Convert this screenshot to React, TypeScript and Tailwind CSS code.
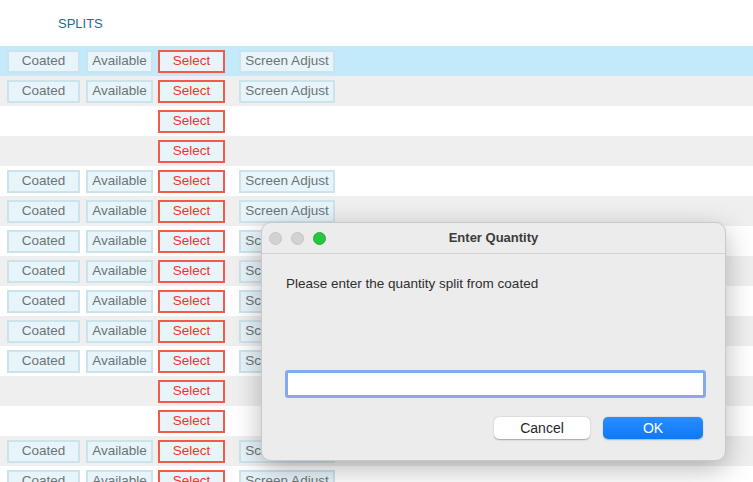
import React from "react";

type Row = { full: boolean };

// true = Coated / Available / Select / Screen Adjust, false = Select only
const rows: Row[] = [
  true, true, false, false, true, true, true, true, true, true, true, false, false, true, true,
].map((full) => ({ full }));

function CellButton({ label, width, red }: { label: string; width: string; red?: boolean }) {
  return (
    <div
      className={`${width} h-[23px] flex items-center justify-center bg-[#e7f4f9] text-[13.5px] ${
        red
          ? "border-2 border-[#f25a4a] text-[#f2352a]"
          : "border-2 border-[#cde3ec] text-[#6a7478]"
      }`}
    >
      {label}
    </div>
  );
}

function EnterQuantity() {
  return (
    <div className="absolute left-[261px] top-[222px] w-[465px] h-[239px] rounded-[10px] bg-[#ececec] border border-[#c9c9c9] shadow-[0_8px_28px_rgba(0,0,0,0.28)] flex flex-col overflow-hidden">
      <div className="h-[31px] shrink-0 flex items-center relative border-b border-[#d3d3d3]">
        <div className="flex items-center gap-[9px] pl-[7px]">
          <span className="w-[13px] h-[13px] rounded-full bg-[#d2d2d2] border border-[#c4c4c4]" />
          <span className="w-[13px] h-[13px] rounded-full bg-[#d2d2d2] border border-[#c4c4c4]" />
          <span className="w-[13px] h-[13px] rounded-full bg-[#29c53f] border border-[#22b036]" />
        </div>
        <div className="absolute inset-0 flex items-center justify-center text-[13px] font-bold text-[#3b3b3b]">
          Enter Quantity
        </div>
      </div>
      <div className="px-[24px] pt-[20px] text-[13.5px] text-[#2e2e2e]">
        Please enter the quantity split from coated
      </div>
      <div className="mt-[76px] pl-[23px]">
        <input
          className="w-[421px] h-[28px] bg-white border-[3px] border-[#86a9ec] rounded-[3px] outline-none"
          defaultValue=""
        />
      </div>
      <div className="mt-[19px] flex justify-end gap-[13px] pr-[22px]">
        <button className="w-[96px] h-[22px] rounded-[5px] bg-white text-[14px] text-[#262626] shadow-[0_0.5px_1.5px_rgba(0,0,0,0.3)]">
          Cancel
        </button>
        <button className="w-[100px] h-[22px] rounded-[5px] bg-gradient-to-b from-[#2a8cfd] to-[#0a79fa] text-[14px] text-white shadow-[0_0.5px_1.5px_rgba(0,0,0,0.25)]">
          OK
        </button>
      </div>
    </div>
  );
}

export default function App() {
  return (
    <div
      className="relative w-[753px] h-[482px] overflow-hidden bg-white"
      style={{ fontFamily: '"Liberation Sans", Arial, sans-serif' }}
    >
      <div className="h-[46px] pl-[58px] pt-[14px] text-[13px] text-[#1f6c8c]">SPLITS</div>
      {rows.map((row, i) => (
        <div
          key={i}
          className={`h-[30px] flex items-start pt-[4px] pl-[7px] ${
            i === 0 ? "bg-[#c2eafa]" : i % 2 === 1 ? "bg-[#efefef]" : "bg-white"
          }`}
        >
          {row.full ? (
            <>
              <CellButton label="Coated" width="w-[73px]" />
              <div className="ml-[6px]">
                <CellButton label="Available" width="w-[67px]" />
              </div>
            </>
          ) : (
            <div className="w-[146px]" />
          )}
          <div className="ml-[5px]">
            <CellButton label="Select" width="w-[67px]" red />
          </div>
          {row.full && (
            <div className="ml-[14px]">
              <CellButton label="Screen Adjust" width="w-[96px]" />
            </div>
          )}
        </div>
      ))}
      <EnterQuantity />
    </div>
  );
}
